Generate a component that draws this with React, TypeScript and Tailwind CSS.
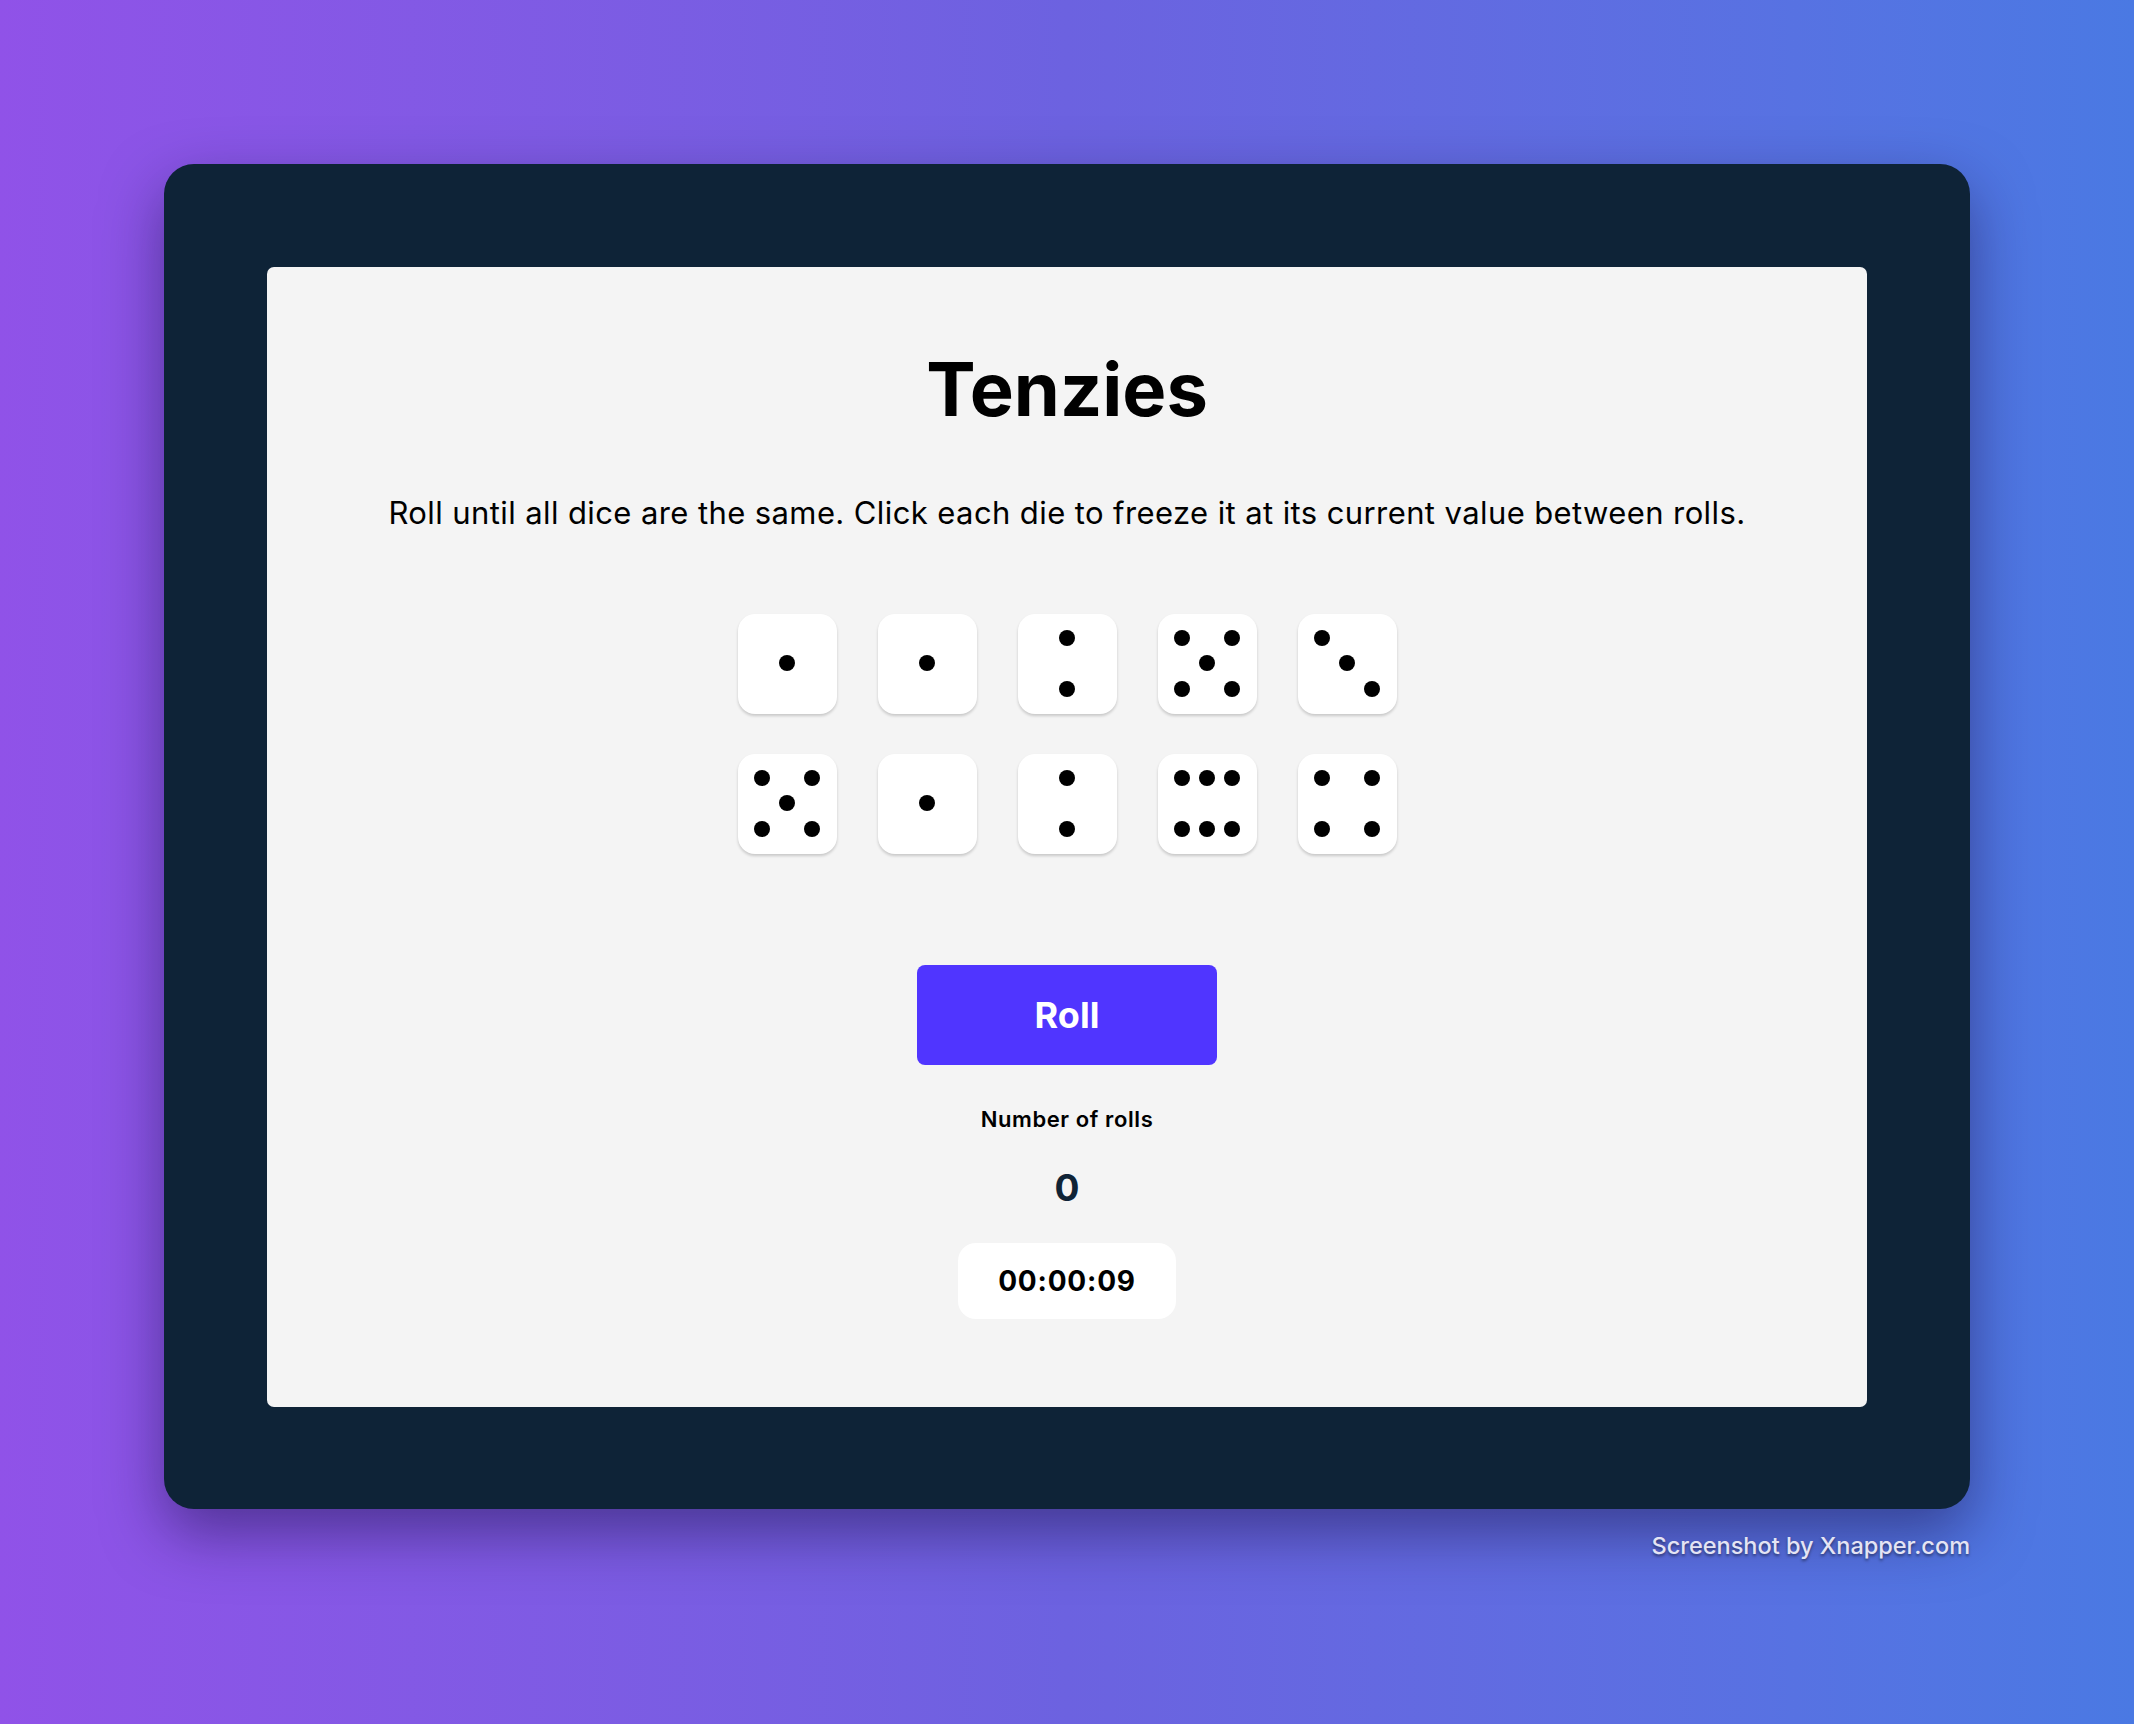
import React from "react";

// which of the 9 cells (row-major, 3x3) carry a pip for each face
const faces: Record<number, number[]> = {
  1: [4],
  2: [1, 7],
  3: [0, 4, 8],
  4: [0, 2, 6, 8],
  5: [0, 2, 4, 6, 8],
  6: [0, 1, 2, 6, 7, 8],
};

const dice = [1, 1, 2, 5, 3, 5, 1, 2, 6, 4];

function Die({ value }: { value: number }) {
  const pips = faces[value];
  return (
    <button className="w-[99px] h-[100px] bg-white rounded-[17px] shadow-[0_2px_3px_rgba(0,0,0,0.18)] grid grid-cols-3 grid-rows-3 p-[12px] cursor-pointer">
      {Array.from({ length: 9 }).map((_, i) => (
        <div key={i} className="flex items-center justify-center">
          {pips.includes(i) && <span className="block w-[16px] h-[16px] rounded-full bg-black" />}
        </div>
      ))}
    </button>
  );
}

export default function App() {
  return (
    <div
      className="min-h-screen w-full bg-gradient-to-r from-[#9052e8] via-[#6c62e0] to-[#4a79e3] pt-[164px] flex flex-col items-center"
      style={{ fontFamily: "Inter, 'Noto Sans', sans-serif" }}
    >
      {/* dark frame */}
      <div className="w-[1806px] h-[1345px] bg-[#0e2337] rounded-[30px] shadow-[0_24px_60px_rgba(25,15,70,0.5)] flex items-center justify-center">
        {/* game panel */}
        <main className="w-[1600px] h-[1140px] bg-[#f4f4f4] rounded-[7px] flex flex-col items-center pt-[85px]">
          <h1 className="text-[74px] leading-none font-bold text-black">Tenzies</h1>
          <p className="mt-[71px] text-[31px] leading-none text-black tracking-[0.4px]">
            Roll until all dice are the same. Click each die to freeze it at its current value between rolls.
          </p>

          <div className="mt-[86px] grid grid-cols-5 gap-x-[41px] gap-y-[40px]">
            {dice.map((v, i) => (
              <Die key={i} value={v} />
            ))}
          </div>

          <button className="mt-[111px] w-[300px] h-[100px] rounded-[8px] bg-[#5035ff] text-white text-[36px] font-bold">
            Roll
          </button>

          <p className="mt-[43px] text-[22px] leading-none font-semibold text-black tracking-[0.6px]">Number of rolls</p>
          <p className="mt-[39px] text-[37px] leading-none font-bold text-[#0f2336]">0</p>

          <div className="mt-[37px] w-[218px] h-[76px] bg-white rounded-[18px] flex items-center justify-center">
            <span className="text-[28px] font-bold text-black tracking-[0.8px]">00:00:09</span>
          </div>
        </main>
      </div>

      <div className="w-[1806px] flex justify-end mt-[25px]">
        <span className="text-[23.5px] leading-none font-medium text-[#e4e4f4] [text-shadow:0_2px_3px_rgba(0,0,0,0.45)]">
          Screenshot by Xnapper.com
        </span>
      </div>
    </div>
  );
}
